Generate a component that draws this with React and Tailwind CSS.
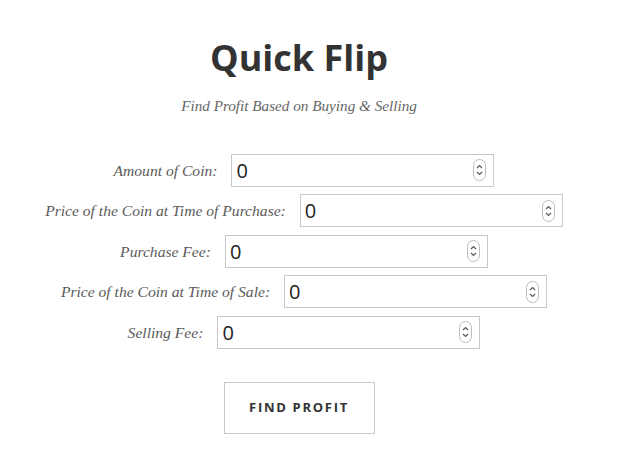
import React from "react";

function Spinner() {
  return (
    <div className="absolute right-[7px] top-1/2 -translate-y-1/2 w-[13px] h-[22px] rounded-full border border-[#bdbdbd] bg-white flex flex-col items-center justify-center gap-[2px]">
      <svg width="7" height="5" viewBox="0 0 7 5" fill="none">
        <path d="M1 4L3.5 1.5L6 4" stroke="#555" strokeWidth="1.1" />
      </svg>
      <svg width="7" height="5" viewBox="0 0 7 5" fill="none">
        <path d="M1 1L3.5 3.5L6 1" stroke="#555" strokeWidth="1.1" />
      </svg>
    </div>
  );
}

function Row({ label }) {
  return (
    <div className="flex items-center justify-center gap-[14px] pr-[13px]">
      <label
        className="text-[15.6px] italic text-[#5a5a5a]"
        style={{ fontFamily: '"Liberation Serif", serif' }}
      >
        {label}
      </label>
      <div className="relative w-[263px] h-[33px] border border-[#c8c8c8] bg-white">
        <input
          type="text"
          defaultValue="0"
          className="w-full h-full pl-[4px] text-[20px] text-[#222] outline-none bg-transparent"
          style={{ fontFamily: '"Open Sans", sans-serif' }}
        />
        <Spinner />
      </div>
    </div>
  );
}

export default function App() {
  return (
    <div className="w-[621px] h-[468px] bg-white flex flex-col items-center">
      <h1
        className="mt-[31px] text-[36px] leading-[54px] font-bold text-[#333] pr-[23px]"
        style={{ fontFamily: '"Open Sans", sans-serif' }}
      >
        Quick Flip
      </h1>
      <p
        className="mt-[10px] text-[15.2px] italic text-[#666] pr-[23px]"
        style={{ fontFamily: '"Liberation Serif", serif' }}
      >
        Find Profit Based on Buying &amp; Selling
      </p>
      <div className="mt-[36px] flex flex-col gap-[7.5px] w-full">
        <Row label="Amount of Coin:" />
        <Row label="Price of the Coin at Time of Purchase:" />
        <Row label="Purchase Fee:" />
        <Row label="Price of the Coin at Time of Sale:" />
        <Row label="Selling Fee:" />
      </div>
      <button
        className="mt-[33px] w-[151px] h-[52px] border border-[#c8c8c8] bg-white text-[13px] font-bold tracking-[1.7px] text-[#333] mr-[23px]"
        style={{ fontFamily: '"Open Sans", sans-serif' }}
      >
        FIND PROFIT
      </button>
    </div>
  );
}
